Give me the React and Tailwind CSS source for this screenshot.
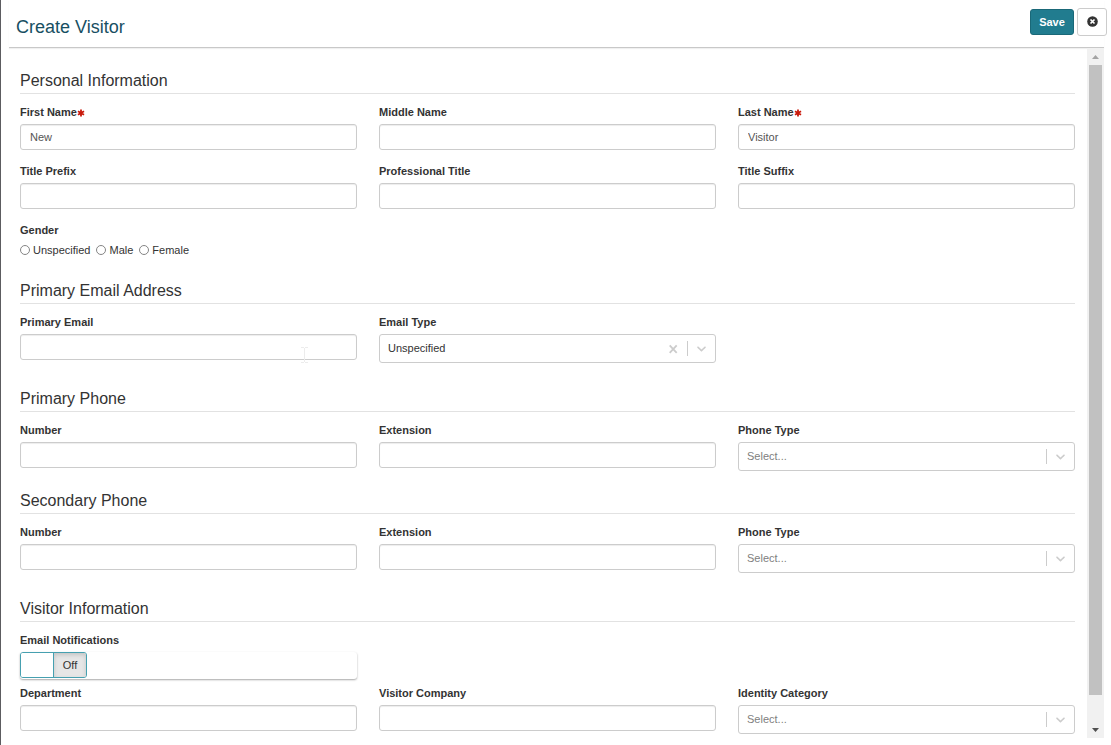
import React, { useId, useState } from "react";

function Section({ title, className = "", children }) {
  return (
    <section className={className}>
      <h2 className="border-b border-[#e2e2e2] pb-0.5 text-base leading-5 text-[#333]">{title}</h2>
      <div className="pt-[11px]">{children}</div>
    </section>
  );
}

function Row({ className = "", children }) {
  return <div className={"grid grid-cols-3 items-start gap-x-[22px] " + className}>{children}</div>;
}

function Required() {
  return (
    <svg className="mt-px h-2 w-2" viewBox="0 0 16 16" aria-hidden="true">
      <path d="M8 1v14M1.9 4.5l12.2 7M14.1 4.5l-12.2 7" stroke="#c9190b" strokeWidth="3.6" />
    </svg>
  );
}

function Label({ htmlFor, required, children }) {
  return (
    <label htmlFor={htmlFor} className="mb-1 flex h-[15px] items-center text-[11px] leading-[15px] font-bold text-[#333]">
      {children}
      {required && <Required />}
    </label>
  );
}

function TextField({ label, required, value = "", children }) {
  const id = useId();
  return (
    <div className="relative min-w-0">
      <Label htmlFor={id} required={required}>{label}</Label>
      <input
        id={id}
        type="text"
        required={required}
        defaultValue={value}
        className="block h-[26px] w-full rounded-[3px] border border-[#ccc] bg-white px-[9px] text-[11px] text-[#555] shadow-[inset_0_1px_1px_rgba(0,0,0,0.075)] outline-none focus:border-[#2b8ea0]"
      />
      {children}
    </div>
  );
}

function Chevron() {
  return (
    <svg className="h-[15px] w-[15px] fill-[#ccc]" viewBox="0 0 20 20" aria-hidden="true">
      <path d="M4.516 7.548c0.436-0.446 1.043-0.481 1.576 0l3.908 3.747 3.908-3.747c0.533-0.481 1.141-0.446 1.574 0 0.436 0.445 0.408 1.197 0 1.615-0.406 0.418-4.695 4.502-4.695 4.502-0.217 0.223-0.502 0.335-0.787 0.335s-0.57-0.112-0.789-0.335c0 0-4.287-4.084-4.695-4.502s-0.436-1.17 0-1.615z" />
    </svg>
  );
}

function SelectField({ label, initial = "", options }) {
  const id = useId();
  const [value, setValue] = useState(initial);
  return (
    <div className="min-w-0">
      <Label htmlFor={id}>{label}</Label>
      <div className="relative">
        <select
          id={id}
          value={value}
          onChange={(e) => setValue(e.target.value)}
          className={
            "block h-[29px] w-full appearance-none rounded-[3px] border border-[#ccc] bg-white pr-14 pl-2 text-[11px] outline-none " +
            (value ? "text-[#333]" : "text-[#808080]")
          }
        >
          <option value="">Select...</option>
          {options.map((o) => (
            <option key={o}>{o}</option>
          ))}
        </select>
        <div className="pointer-events-none absolute inset-y-0 right-0 flex items-center pr-[7px]">
          {value && (
            <button
              type="button"
              aria-label="Clear selection"
              onClick={() => setValue("")}
              className="pointer-events-auto mr-[7px]"
            >
              <svg className="block h-[14px] w-[14px]" viewBox="0 0 14 14" aria-hidden="true">
                <path d="M3.7 3.4l7 7.4M10.7 3.4L3.7 10.8" stroke="#ccc" strokeWidth="1.8" />
              </svg>
            </button>
          )}
          <span className="mr-[6px] h-[15px] w-px bg-[#ccc]" />
          <Chevron />
        </div>
      </div>
    </div>
  );
}

function Radio({ label }) {
  return (
    <label className="flex items-center gap-[3px]">
      <input
        type="radio"
        name="gender"
        className="h-[10px] w-[10px] appearance-none rounded-full border border-[#858585] bg-white checked:border-[3px] checked:border-[#217c8f]"
      />
      {label}
    </label>
  );
}

function Toggle() {
  const id = useId();
  const [on, setOn] = useState(false);
  return (
    <div>
      <Label htmlFor={id}>Email Notifications</Label>
      <div className="h-[27px] rounded-[3px] shadow-[0_1px_2px_rgba(0,0,0,0.35)]">
        <button
          id={id}
          type="button"
          role="switch"
          aria-checked={on}
          onClick={() => setOn(!on)}
          className="grid h-[26px] w-[67px] grid-cols-[32px_1fr] overflow-hidden rounded-[3px] border border-[#46a0b0] text-[11px] text-[#333]"
        >
          <span className="flex h-full items-center justify-center bg-white">{on ? "On" : ""}</span>
          <span className="flex h-full items-center justify-center border-l border-[#46a0b0] bg-[#e6e6e6] shadow-[inset_0_2px_4px_rgba(0,0,0,0.15)]">
            {on ? "" : "Off"}
          </span>
        </button>
      </div>
    </div>
  );
}

function ScrollBar() {
  return (
    <div className="flex w-[17px] shrink-0 flex-col bg-[#f1f1f1]">
      <button type="button" aria-label="Scroll up" className="flex h-[17px] shrink-0 items-center justify-center">
        <svg className="h-1 w-[7px]" viewBox="0 0 7 4" aria-hidden="true">
          <path d="M0 4L3.5 0L7 4z" fill="#a3a3a3" />
        </svg>
      </button>
      <div className="flex flex-1 flex-col px-0.5">
        <div className="flex-[24] bg-[#c1c1c1]" />
        <div className="flex-1" />
      </div>
      <button type="button" aria-label="Scroll down" className="flex h-[17px] shrink-0 items-center justify-center">
        <svg className="h-1 w-[7px]" viewBox="0 0 7 4" aria-hidden="true">
          <path d="M0 0L3.5 4L7 0z" fill="#505050" />
        </svg>
      </button>
    </div>
  );
}

const phoneTypes = ["Home", "Mobile", "Work"];

export default function App() {
  return (
    <form
      onSubmit={(e) => e.preventDefault()}
      className="flex h-screen flex-col border-l border-[#5c5c60] bg-white pr-[7px] pb-[7px] pl-2 font-['Liberation_Sans',Arial,sans-serif] text-[#333]"
    >
      <header className="flex h-12 shrink-0 items-start border-b border-[#c8c8c8] pt-2 pl-[7px] shadow-[0_1px_1px_rgba(0,0,0,0.06)]">
        <h1 className="flex-1 pt-[7px] text-lg leading-6 text-[#174f62]">Create Visitor</h1>
        <div className="-mr-[3px] flex items-start gap-[3px]">
          <button
            type="submit"
            className="mt-px h-[26px] w-11 rounded-[3px] border border-[#1a6878] bg-[#217c8f] text-[11px] font-bold text-white"
          >
            Save
          </button>
          <button
            type="button"
            aria-label="Close"
            className="flex h-7 w-[30px] items-center justify-center rounded-[3px] border border-[#ccc] bg-white pb-[2px]"
          >
            <svg className="h-[11px] w-[11px]" viewBox="0 0 22 22" aria-hidden="true">
              <circle cx="11" cy="11" r="10.6" fill="#333" />
              <path d="M7 7l8 8M15 7l-8 8" stroke="#fff" strokeWidth="3.4" />
            </svg>
          </button>
        </div>
      </header>

      <div className="flex min-h-0 flex-1">
        <main className="min-w-0 flex-1 overflow-y-auto pt-[23px] pr-3 pl-[11px] [scrollbar-width:none]">
          <Section title="Personal Information">
            <Row>
              <TextField label="First Name" required value="New" />
              <TextField label="Middle Name" />
              <TextField label="Last Name" required value="Visitor" />
            </Row>
            <Row className="mt-3.5">
              <TextField label="Title Prefix" />
              <TextField label="Professional Title" />
              <TextField label="Title Suffix" />
            </Row>
            <fieldset className="mt-3.5">
              <legend className="mb-1 block h-[15px] text-[11px] leading-[15px] font-bold">Gender</legend>
              <div className="flex h-4 items-center gap-1.5 text-[11px] leading-4">
                <Radio label="Unspecified" />
                <Radio label="Male" />
                <Radio label="Female" />
              </div>
            </fieldset>
          </Section>

          <Section title="Primary Email Address" className="mt-[23px]">
            <Row>
              <TextField label="Primary Email">
                <svg className="pointer-events-none absolute top-8 left-[281px] h-4 w-[7px]" viewBox="0 0 7 16" aria-hidden="true">
                  <path d="M0 .5h3M4 .5h3M3.5 1v14M0 15.5h3M4 15.5h3" stroke="#ececec" fill="none" />
                </svg>
              </TextField>
              <SelectField label="Email Type" initial="Unspecified" options={["Unspecified", "Home", "Work"]} />
            </Row>
          </Section>

          <Section title="Primary Phone" className="mt-[26px]">
            <Row>
              <TextField label="Number" />
              <TextField label="Extension" />
              <SelectField label="Phone Type" options={phoneTypes} />
            </Row>
          </Section>

          <Section title="Secondary Phone" className="mt-5">
            <Row>
              <TextField label="Number" />
              <TextField label="Extension" />
              <SelectField label="Phone Type" options={phoneTypes} />
            </Row>
          </Section>

          <Section title="Visitor Information" className="mt-[26px]">
            <Row>
              <Toggle />
            </Row>
            <Row className="mt-[7px]">
              <TextField label="Department" />
              <TextField label="Visitor Company" />
              <SelectField label="Identity Category" options={["Contractor", "Guest", "Vendor"]} />
            </Row>
          </Section>
        </main>
        <ScrollBar />
      </div>
    </form>
  );
}
